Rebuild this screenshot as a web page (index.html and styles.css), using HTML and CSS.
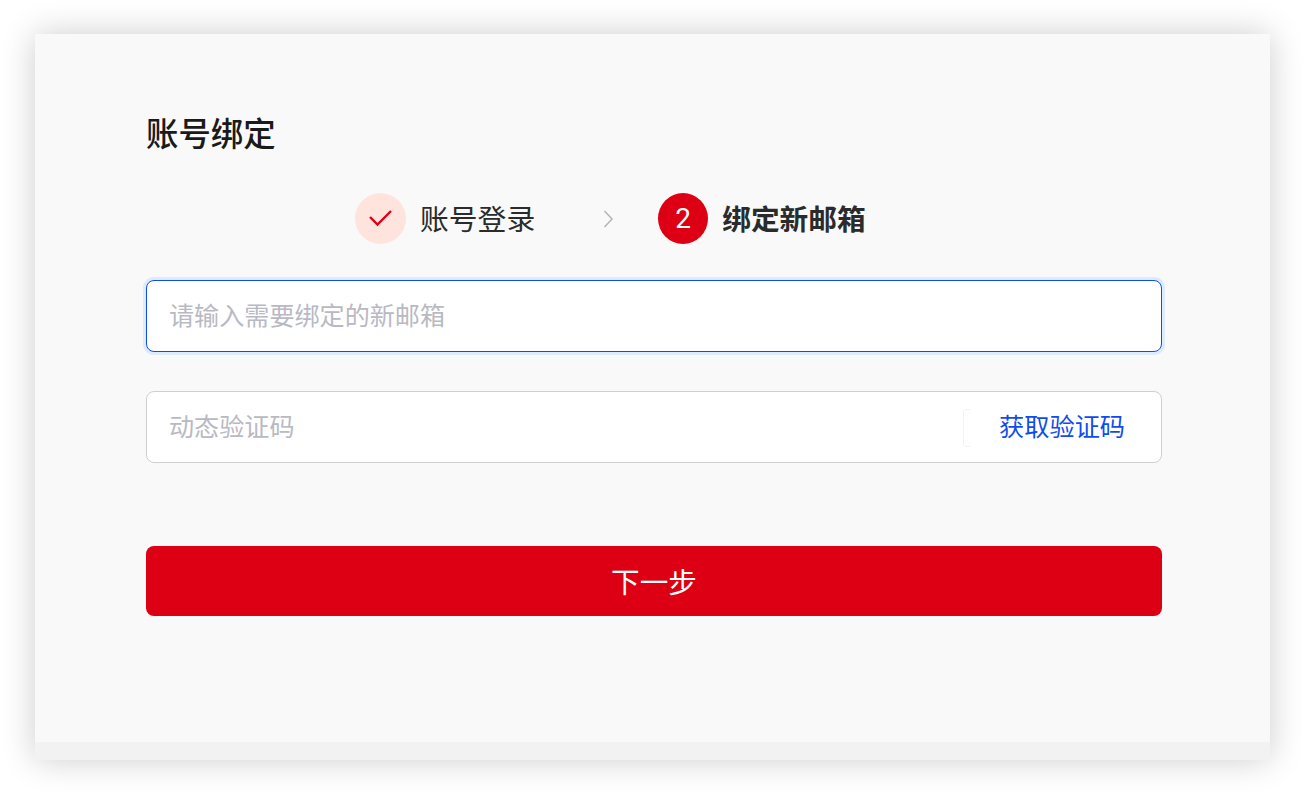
FILE: index.html
```html
<!DOCTYPE html>
<html lang="zh-CN">
<head>
<meta charset="utf-8">
<title>账号绑定</title>
<link rel="stylesheet" href="styles.css">
</head>
<body>
<main class="panel">
  <div class="content">
    <h1 class="title">账号绑定</h1>
    <div class="steps">
      <div class="step">
        <span class="badge badge-done">
          <svg class="check" width="24" height="18" viewBox="0 0 24 18"><path d="M1 7L8.5 14.5L22 1" fill="none" stroke="#df0015" stroke-width="2.4"/></svg>
        </span>
        <span class="step-label">账号登录</span>
      </div>
      <svg class="chevron" width="10" height="18" viewBox="0 0 10 18"><path d="M1.5 1L9 9L1.5 17" fill="none" stroke="#b4b4b4" stroke-width="1.5"/></svg>
      <div class="step">
        <span class="badge badge-active">2</span>
        <span class="step-label step-label-active">绑定新邮箱</span>
      </div>
    </div>
    <div class="field field-focus">
      <span class="placeholder">请输入需要绑定的新邮箱</span>
    </div>
    <div class="field field-code">
      <span class="placeholder">动态验证码</span>
      <span class="code-link">获取验证码</span>
    </div>
    <button class="submit" type="button">下一步</button>
  </div>
  <div class="panel-foot"></div>
</main>
</body>
</html>
```
FILE: styles.css
```css
* { box-sizing: border-box; }
html, body { margin: 0; height: 100%; }
body {
  width: 1304px;
  height: 794px;
  padding: 34px 34px 34px 35px;
  background: #fff;
  overflow: hidden;
  font-family: "Noto Sans CJK SC", "Noto Sans", sans-serif;
}
.panel {
  width: 1235px;
  height: 726px;
  display: flex;
  flex-direction: column;
  background: #f9f9f9;
  box-shadow: 0 0 32px rgba(0, 0, 0, 0.2);
}
.content {
  flex: 1;
  padding: 76px 108px 0 111px;
}
.title {
  margin: 0;
  font-size: 32.4px;
  line-height: 44px;
  font-weight: 500;
  color: #1a1a1a;
}
.steps {
  margin-top: 39px;
  padding-left: 209px;
  display: flex;
  align-items: center;
  height: 51px;
}
.step {
  display: flex;
  align-items: center;
  gap: 14px;
}
.chevron {
  margin: 0 45px 0 68px;
}
.badge {
  width: 51px;
  height: 51px;
  border-radius: 50%;
  display: flex;
  align-items: center;
  justify-content: center;
}
.badge-done { background: #ffe4de; }
.badge-active {
  width: 50px;
  background: #dd0014;
  color: #fff;
  font-family: Roboto, sans-serif;
  font-size: 28px;
}
.step-label {
  font-size: 28.8px;
  line-height: 47px;
  padding-bottom: 3px;
  color: #2b2b2b;
}
.step-label-active { font-weight: 700; font-size: 28.7px; }
.field {
  height: 72px;
  display: flex;
  align-items: center;
  justify-content: space-between;
  padding: 0 36px 4px 22px;
  background: #fff;
  border: 1px solid #cfcfcf;
  border-radius: 8px;
  font-size: 25.1px;
}
.field-focus {
  margin-top: 36px;
  border-color: #0f4cf0;
  box-shadow: 0 0 0 3px #dcebfe;
}
.field-code { margin-top: 39px; position: relative; }
.placeholder { color: #b9b9c3; }
.code-link {
  color: #0f4cf0;
  font-size: 25.2px;
}
.field-code::after {
  content: "";
  position: absolute;
  right: 191px;
  top: 17px;
  width: 6px;
  height: 36px;
  border: 1px solid #f2f2f2;
  border-right: 0;
  border-radius: 4px 0 0 4px;
}
.submit {
  display: block;
  width: 100%;
  height: 70px;
  margin-top: 83px;
  padding: 0 0 1px;
  border: 0;
  border-radius: 8px;
  background: #dd0014;
  color: #fff;
  font: inherit;
  font-size: 28.6px;
}
.panel-foot {
  height: 18px;
  background: #f2f2f2;
}
```
